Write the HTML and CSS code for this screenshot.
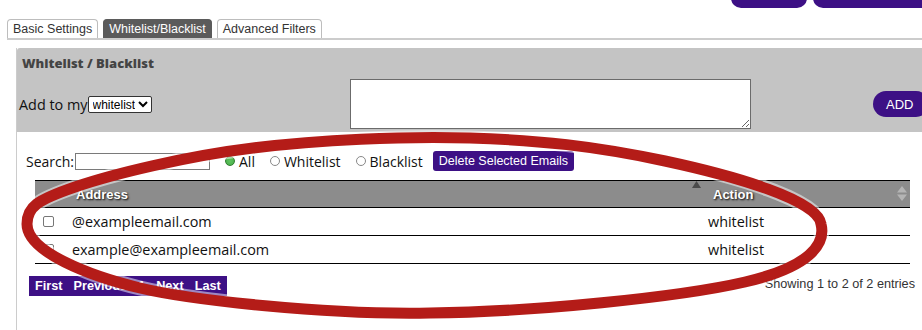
FILE: index.html
```html
<!DOCTYPE html>
<html lang="en">
<head>
    <meta charset="UTF-8">
    <title>Whitelist / Blacklist</title>
    <link rel="stylesheet" href="styles.css">
</head>
<body>
    <!-- Botones superiores (cortados por el borde) -->
    <div class="top-actions">
        <button class="top-btn short" aria-label="Save"></button>
        <button class="top-btn long" aria-label="Save and close"></button>
    </div>

    <!-- Pestañas -->
    <ul class="tabs">
        <li class="tab">Basic Settings</li>
        <li class="tab active">Whitelist/Blacklist</li>
        <li class="tab">Advanced Filters</li>
    </ul>

    <div class="panel">
        <div class="panel-head">
            <h3>Whitelist / Blacklist</h3>
            <div class="add-row">
                <label class="add-label">Add to my<select class="list-select">
                    <option>whitelist</option>
                    <option>blacklist</option>
                </select></label>
                <textarea class="add-input"></textarea>
                <button class="add-btn">ADD</button>
            </div>
        </div>

        <div class="panel-body">
            <div class="filter-row">
                <label class="search">Search:<input type="text"></label>
                <label class="radio"><input type="radio" name="filter" checked>All</label>
                <label class="radio"><input type="radio" name="filter">Whitelist</label>
                <label class="radio"><input type="radio" name="filter">Blacklist</label>
                <button class="delete-btn">Delete Selected Emails</button>
            </div>

            <table class="email-table">
                <thead>
                    <tr>
                        <th class="col-check"></th>
                        <th class="col-address">Address<span class="sort-icon">
                            <svg width="9" height="7" viewBox="0 0 9 7"><path d="M4.5 0 L9 7 L0 7 Z" fill="#4a4a4a"/></svg>
                        </span></th>
                        <th class="col-action">Action<span class="sort-icon both">
                            <svg width="10" height="15" viewBox="0 0 10 15"><path d="M5 0 L10 6.5 L0 6.5 Z M5 15 L10 8.5 L0 8.5 Z" fill="#b4b4b4"/></svg>
                        </span></th>
                    </tr>
                </thead>
                <tbody>
                    <tr>
                        <td><input type="checkbox"></td>
                        <td>@exampleemail.com</td>
                        <td>whitelist</td>
                    </tr>
                    <tr>
                        <td><input type="checkbox"></td>
                        <td>example@exampleemail.com</td>
                        <td>whitelist</td>
                    </tr>
                </tbody>
            </table>

            <div class="table-foot">
                <div class="pagination">
                    <a>First</a>
                    <a>Previous</a>
                    <a class="current">1</a>
                    <a>Next</a>
                    <a>Last</a>
                </div>
                <div class="info">Showing 1 to 2 of 2 entries</div>
            </div>
        </div>
    </div>

    <!-- Anotación roja -->
    <svg class="annotation" width="922" height="330" viewBox="0 0 922 330">
        <path class="halo" d="M27,224 C27,207 37,200 75,187 C113,174 187,156 253,148 C319,140 402,136 470,138 C538,140 595,146 665,161 C735,176 818,200 821,224 C826,244 810,267 745,282 C680,297 533,312 430,313 C327,315 190,300 140,288 C90,276 27,252 27,224 Z"/>
        <path class="ring" d="M27,224 C27,207 37,200 75,187 C113,174 187,156 253,148 C319,140 402,136 470,138 C538,140 595,146 665,161 C735,176 818,200 821,224 C826,244 810,267 745,282 C680,297 533,312 430,313 C327,315 190,300 140,288 C90,276 27,252 27,224 Z"/>
    </svg>
</body>
</html>
```

FILE: styles.css
```css
/* Reset básico */
* {
    margin: 0;
    padding: 0;
    box-sizing: border-box;
}

body {
    font-family: 'Open Sans', sans-serif;
    color: #1a1a1a;
    background-color: #ffffff;
    width: 922px;
    height: 330px;
    overflow: hidden;
    position: relative;
}

/* Botones superiores */
.top-actions {
    display: flex;
    gap: 6px;
    height: 8px;
    padding-left: 731px;
}

.top-btn {
    flex-shrink: 0;
    height: 40px;
    margin-top: -32px;
    background-color: #3d1085;
    border: none;
    border-radius: 10px;
}

.top-btn.short {
    width: 76px;
}

.top-btn.long {
    width: 130px;
}

/* Pestañas */
.tabs {
    display: flex;
    gap: 5px;
    list-style: none;
    margin: 11px 0 0 7px;
    border-bottom: 2px solid #cccccc;
}

.tab {
    height: 19px;
    line-height: 18px;
    padding: 0 5px;
    border: 1px solid #bdbdbd;
    border-bottom: none;
    border-radius: 4px 4px 0 0;
    font-family: 'Liberation Sans', Arial, sans-serif;
    font-size: 12.5px;
    color: #333333;
    background-color: #ffffff;
}

.tab.active {
    background-color: #5b5b5b;
    border-color: #5b5b5b;
    color: #ffffff;
}

/* Panel */
.panel {
    margin: 8px 0 0 16px;
    width: 906px;
    height: 282px;
    border-left: 1px solid #cccccc;
}

.panel-head {
    background-color: #c4c4c4;
    height: 84px;
    padding: 7px 0 0 2px;
    border-radius: 3px 0 0 0;
}

.panel-head h3 {
    font-size: 13px;
    font-weight: 800;
    line-height: 16px;
    color: #444444;
    padding-left: 3px;
}

.add-row {
    display: flex;
    align-items: center;
    margin-top: 8px;
    height: 50px;
}

.add-label {
    flex: 0 0 331px;
    font-size: 14.4px;
    color: #111111;
    display: flex;
    align-items: center;
}

.list-select {
    height: 17px;
    width: 64px;
    font-family: 'Liberation Sans', Arial, sans-serif;
    font-size: 12px;
    border: 1px solid #333333;
    border-radius: 2px;
    background-color: #ffffff;
    color: #000000;
}

.add-input {
    flex: 0 0 401px;
    height: 50px;
    border: 1px solid #6b6b6b;
    background-color: #ffffff;
}

.add-btn {
    flex-shrink: 0;
    margin-left: 122px;
    width: 56px;
    height: 26px;
    border: none;
    border-radius: 13px;
    background-color: #3d1085;
    color: #ffffff;
    font-family: 'Liberation Sans', Arial, sans-serif;
    font-size: 13px;
    text-align: left;
    padding-left: 13px;
}

/* Contenido */
.panel-body {
    padding: 19px 0 0 9px;
}

.filter-row {
    display: flex;
    align-items: center;
    height: 20px;
    font-size: 14px;
}

.search {
    display: flex;
    align-items: center;
    color: #111111;
}

.search input {
    width: 135px;
    height: 17px;
    border: 1px solid #7a7a7a;
    margin-left: 1px;
}

.radio {
    display: flex;
    align-items: center;
    margin-left: 15px;
    color: #111111;
}

.radio:first-of-type {
    margin-left: 16px;
}

.radio input {
    appearance: none;
    width: 10px;
    height: 10px;
    border: 1px solid #888888;
    border-radius: 50%;
    margin-right: 4px;
    background-color: #ffffff;
}

.radio input:checked {
    border-color: #2f7d2f;
    background: radial-gradient(circle, #5fc35f 0, #47ad47 100%);
}

.delete-btn {
    margin-left: 10px;
    height: 20px;
    padding: 0 6px;
    border: none;
    border-radius: 3px;
    background-color: #3d1085;
    color: #ffffff;
    font-family: 'Liberation Sans', Arial, sans-serif;
    font-size: 12.5px;
}

/* Tabla */
.email-table {
    margin: 9px 0 0 9px;
    width: 875px;
    border-collapse: collapse;
    table-layout: fixed;
}

.email-table th {
    height: 27px;
    background-color: #8c8c8c;
    color: #ffffff;
    font-family: 'Liberation Sans', Arial, sans-serif;
    font-size: 13px;
    font-weight: 700;
    text-align: left;
    text-shadow: 1px 1px 2px #000000;
    border-top: 1px solid #000000;
    border-bottom: 1px solid #000000;
    padding-left: 14px;
}

.email-table th.col-check {
    width: 27px;
}

.email-table th.col-address {
    width: 636px;
}

.email-table th.col-action {
    padding-left: 15px;
}

.sort-icon {
    float: right;
    line-height: 0;
    margin-top: -6px;
    margin-right: -3px;
}

.sort-icon.both {
    margin-top: -1px;
    margin-right: 3px;
}

.email-table td {
    height: 28px;
    font-size: 14.4px;
    color: #111111;
    border-bottom: 1px solid #000000;
    padding-left: 10px;
}

.email-table td:first-child {
    padding-left: 8px;
}

.email-table td input {
    appearance: none;
    display: block;
    width: 11px;
    height: 11px;
    border: 1px solid #777777;
    border-radius: 2px;
    background-color: #ffffff;
}

/* Pie de la tabla */
.table-foot {
    display: flex;
    justify-content: space-between;
    align-items: flex-start;
    margin: 12px 7px 0 3px;
}

.pagination {
    display: flex;
    gap: 11px;
    height: 20px;
    align-items: center;
    padding: 0 6px;
    background-color: #3d1085;
}

.pagination a {
    color: #ffffff;
    font-family: 'Liberation Sans', Arial, sans-serif;
    font-size: 12.7px;
    font-weight: 700;
}

.info {
    margin-top: 1px;
    font-family: 'Liberation Sans', Arial, sans-serif;
    font-size: 12.7px;
    color: #333333;
}

/* Anotación */
.annotation {
    position: absolute;
    top: 0;
    left: 0;
    pointer-events: none;
}

.annotation path {
    fill: none;
}

.annotation .halo {
    stroke: #ffffff;
    stroke-width: 15;
    opacity: 0.5;
}

.annotation .ring {
    stroke: #b41c18;
    stroke-width: 11;
}
```
